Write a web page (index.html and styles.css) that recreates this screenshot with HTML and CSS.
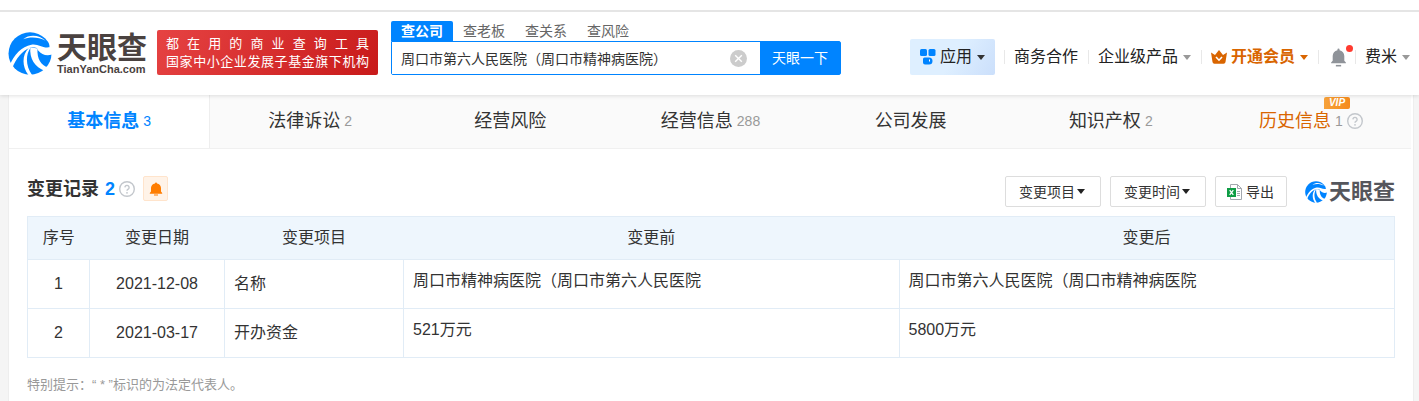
FILE: index.html
```
<!DOCTYPE html>
<html lang="zh-CN">
<head>
    <meta charset="UTF-8">
    <title>天眼查</title>
    <link rel="stylesheet" href="styles.css">
</head>
<body>
    <svg class="defs" width="0" height="0">
        <symbol id="logo" viewBox="0 0 128 126">
            <ellipse cx="64" cy="63" rx="63" ry="62" fill="#0084ff"/>
            <path d="M44 21C62 6 92 8 110 26C88 14 64 14 44 21Z" fill="#fff"/>
            <path d="M5 98C16 66 40 42 68 37C90 34 98 48 121 45L121 32L129 32L129 66C112 72 98 66 88 54L84 47C78 45 70 44 64 46C42 54 22 78 12 106Z" fill="#fff"/>
            <path d="M60 47C40 68 40 102 60 127L70 126C52 100 50 70 65 47Z" fill="#fff"/>
            <path d="M65 45C62 78 78 104 108 114L117 103C96 98 84 78 86 48Z" fill="#fff"/>
        </symbol>
        <symbol id="bell" viewBox="0 0 16 18">
            <path d="M7 1.500a1 1 0 0 1 2 0v.6c2.700.5 4.500 2.700 4.500 5.400v4.500l1.500 1.700v.8H1v-.8L2.500 12V7.500C2.500 4.800 4.300 2.600 7 2.100z"/>
            <path d="M5.500 16h5v1.500h-5z"/>
        </symbol>
        <symbol id="help" viewBox="0 0 16 16">
            <circle cx="8" cy="8" r="7.300" fill="none" stroke="#c3c7cc" stroke-width="1.400"/>
            <path d="M5.900 6.400a2.100 2.100 0 1 1 3.300 1.800C8.400 8.700 8 9 8 9.800" fill="none" stroke="#c3c7cc" stroke-width="1.400"/>
            <circle cx="8" cy="11.800" r=".9" fill="#c3c7cc"/>
        </symbol>
    </svg>

    <header class="header">
        <a class="brand" href="#">
            <svg class="brand-icon"><use href="#logo"/></svg>
            <span class="brand-text">
                <span class="brand-name">天眼查</span>
                <span class="brand-domain">TianYanCha.com</span>
            </span>
        </a>
        <div class="slogan">
            <p>都在用的商业查询工具</p>
            <p>国家中小企业发展子基金旗下机构</p>
        </div>
        <form class="search">
            <div class="search-tabs">
                <button type="button" class="search-tab active">查公司</button>
                <button type="button" class="search-tab">查老板</button>
                <button type="button" class="search-tab">查关系</button>
                <button type="button" class="search-tab">查风险</button>
            </div>
            <div class="search-box">
                <input type="text" class="search-input" aria-label="搜索" value="周口市第六人民医院（周口市精神病医院）">
                <button type="button" class="clear" aria-label="清除">
                    <svg width="17" height="17" viewBox="0 0 17 17"><circle cx="8.500" cy="8.500" r="8.500" fill="#ccc"/><path d="M5.200 5.200l6.600 6.600M11.800 5.200l-6.600 6.600" stroke="#fff" stroke-width="1.400"/></svg>
                </button>
                <button type="submit" class="search-btn">天眼一下</button>
            </div>
        </form>
        <nav class="nav">
            <button type="button" class="app-btn">
                <svg width="16" height="16" viewBox="0 0 16 16" fill="#0084ff"><rect x="0" y="0" width="7" height="7" rx="1.500"/><rect x="8.500" y="0" width="7" height="7" rx="1.500"/><path d="M4.500 8.500H9a3.500 3.500 0 0 1 0 7H5a2 2 0 0 1-2-2V10a1.500 1.500 0 0 1 1.500-1.500z"/><path d="M9.500 10.500v2" stroke="#fff"/></svg>
                应用<i class="caret"></i>
            </button>
            <a href="#" class="nav-item">商务合作</a>
            <a href="#" class="nav-item">企业级产品<i class="caret light"></i></a>
            <a href="#" class="nav-item vip">
                <svg width="16" height="14" viewBox="0 0 16 14"><path d="M0 2.500l4 2.500L8 0l4 5 4-2.500L14.500 12a2 2 0 0 1-2 1.800h-9a2 2 0 0 1-2-1.800z" fill="#d96500"/><path d="M5 7l3 3.200L11 7" fill="none" stroke="#fff" stroke-width="1.600"/></svg>
                开通会员<i class="caret orange"></i>
            </a>
            <a href="#" class="nav-item message" aria-label="消息"><svg width="17" height="19" fill="#8f9399"><use href="#bell"/></svg><i class="dot"></i></a>
            <a href="#" class="nav-item user">费米<i class="caret light"></i></a>
        </nav>
    </header>

    <main class="container">
        <nav class="tabs">
            <a href="#" class="tab active">基本信息<span class="count">3</span></a>
            <a href="#" class="tab">法律诉讼<span class="count">2</span></a>
            <a href="#" class="tab">经营风险</a>
            <a href="#" class="tab">经营信息<span class="count">288</span></a>
            <a href="#" class="tab">公司发展</a>
            <a href="#" class="tab">知识产权<span class="count">2</span></a>
            <a href="#" class="tab history"><span class="history-name">历史信息<b class="vip-badge">VIP</b></span><span class="count">1</span><svg class="help"><use href="#help"/></svg></a>
        </nav>

        <section class="section">
            <div class="section-head">
                <div class="section-title">
                    <h2>变更记录<span class="total">2</span></h2>
                    <svg class="help"><use href="#help"/></svg>
                    <button type="button" class="monitor" aria-label="监控">
                        <svg width="14" height="14" viewBox="0 0 14 14"><path d="M6 1.500a1 1 0 0 1 2 0c2.400.4 4 2.200 4 4.500v3.500l1.200 1.500v.8H.8V11L2 9.500V6c0-2.300 1.600-4.100 4-4.500zM5 12.500h4v1H5z" fill="#ff7d00"/></svg>
                    </button>
                </div>
                <div class="tools">
                    <button type="button" class="tool">变更项目<i class="caret"></i></button>
                    <button type="button" class="tool">变更时间<i class="caret"></i></button>
                    <button type="button" class="tool export">
                        <svg width="15" height="16" viewBox="0 0 15 16"><path d="M3.500.5h7l4 4v11h-11z" fill="#fff" stroke="#a3a8ae"/><path d="M10.500.5v4h4" fill="none" stroke="#a3a8ae"/><path d="M10 7.500h3M10 9.500h3M10 11.500h3" stroke="#a3a8ae"/><rect y="4" width="9" height="9" fill="#0f9d45"/><path d="M2.700 6.200l3.600 4.600M6.300 6.200l-3.600 4.600" stroke="#fff" stroke-width="1.300"/></svg>
                        导出
                    </button>
                    <span class="watermark"><svg class="watermark-icon"><use href="#logo"/></svg>天眼查</span>
                </div>
            </div>
            <table class="table">
                <colgroup>
                    <col class="col-no"><col class="col-date"><col class="col-item"><col><col>
                </colgroup>
                <thead>
                    <tr><th>序号</th><th>变更日期</th><th>变更项目</th><th>变更前</th><th>变更后</th></tr>
                </thead>
                <tbody>
                    <tr>
                        <td class="center">1</td>
                        <td class="center">2021-12-08</td>
                        <td>名称</td>
                        <td class="content">周口市精神病医院（周口市第六人民医院</td>
                        <td class="content">周口市第六人民医院（周口市精神病医院</td>
                    </tr>
                    <tr>
                        <td class="center">2</td>
                        <td class="center">2021-03-17</td>
                        <td>开办资金</td>
                        <td class="content">521万元</td>
                        <td class="content">5800万元</td>
                    </tr>
                </tbody>
            </table>
            <p class="tip">特别提示：“ * ”标识的为法定代表人。</p>
        </section>
    </main>
</body>
</html>
```
FILE: styles.css
```
* {
    box-sizing: border-box;
}
body {
    margin: 0;
    background-color: #f5f5f5;
    color: #333;
    font-family: "Liberation Sans", "Noto Sans CJK SC", sans-serif;
    font-size: 16px;
    line-height: 24px;
}
a {
    color: inherit;
    text-decoration: none;
}
button, input {
    font-family: inherit;
    line-height: inherit;
    color: inherit;
    border: none;
    padding: 0;
    margin: 0;
}
button {
    cursor: pointer;
}
svg {
    flex: none;
}
p, h2 {
    margin: 0;
}
.defs {
    position: absolute;
}
.caret {
    flex: none;
    border: 4px solid transparent;
    border-top: 5px solid #333;
    border-bottom: none;
    margin-left: 5px;
}
.caret.light {
    border-top-color: #999;
}
.caret.orange {
    border-top-color: #d96500;
}
.help {
    width: 16px;
    height: 16px;
}

/* header */
.header {
    position: relative;
    z-index: 1;
    display: flex;
    align-items: center;
    background-color: #fff;
    padding: 8px 9px 20px 8px;
    box-shadow: 0 1px 4px rgba(0, 0, 0, 0.12);
}
.header::before {
    content: "";
    position: absolute;
    top: 10px;
    left: 0;
    right: 0;
    height: 2px;
    background-color: #e5e5e5;
}
.brand {
    display: flex;
    align-items: center;
    margin-top: 24px;
}
.brand-icon {
    width: 44px;
    height: 43px;
    margin-right: 5px;
}
.brand-text {
    display: flex;
    flex-direction: column;
    color: #4a4240;
    font-weight: bold;
}
.brand-name {
    font-size: 30px;
    line-height: 30px;
}
.brand-domain {
    font-size: 11px;
    line-height: 12px;
}
.slogan {
    width: 221px;
    margin: 22px 0 0 10px;
    padding: 5px 9px 4px;
    border-radius: 2px;
    background: linear-gradient(120deg, #e64343, #c81a1a);
    color: #fff;
    font-size: 13px;
    line-height: 18px;
    text-align-last: justify;
}
.search {
    width: 450px;
    margin: 13px 0 0 13px;
}
.search-tabs {
    display: flex;
}
.search-tab {
    width: 62px;
    height: 20px;
    background: none;
    color: #666;
    font-size: 14px;
    line-height: 18px;
}
.search-tab.active {
    background-color: #0084ff;
    border-radius: 2px 2px 0 0;
    color: #fff;
    font-weight: bold;
}
.search-box {
    display: flex;
    align-items: center;
    height: 34px;
    border: 1px solid #0084ff;
    border-radius: 0 2px 2px 2px;
}
.search-input {
    flex: 1;
    min-width: 0;
    height: 32px;
    padding-left: 9px;
    outline: none;
    font-size: 14px;
}
.clear {
    display: flex;
    margin-right: 13px;
    background: none;
}
.search-btn {
    width: 80px;
    height: 32px;
    background-color: #0084ff;
    color: #fff;
    font-size: 14px;
}
.nav {
    display: flex;
    align-items: center;
    margin: 31px 0 0 auto;
    color: #222;
}
.app-btn {
    display: flex;
    align-items: center;
    gap: 4px;
    height: 36px;
    padding: 0 10px;
    margin-right: 9px;
    border-radius: 2px;
    background: linear-gradient(120deg, #deefff 50%, #cbdffb);
    font-size: 16px;
}
.app-btn .caret {
    margin-left: 1px;
}
.nav-item {
    position: relative;
    display: flex;
    align-items: center;
    padding: 0 10px;
}
.nav-item::before {
    content: "";
    position: absolute;
    left: 0;
    top: 5px;
    height: 14px;
    border-left: 1px solid #e8e8e8;
}
.vip {
    gap: 4px;
    color: #d96500;
    font-weight: bold;
}
.vip .caret {
    margin-left: 1px;
}
.message {
    height: 24px;
    padding: 0 8px 0 12px;
}
.dot {
    position: absolute;
    top: 0;
    right: 2px;
    width: 7px;
    height: 7px;
    border-radius: 50%;
    background-color: #ff3b30;
}
.user {
    padding-right: 0;
}

/* company detail */
.container {
    margin: 0 5px 0 8px;
    border: 1px solid #eee;
    border-top: none;
    background-color: #fff;
}
.tabs {
    display: flex;
    margin-right: 2px;
    background-color: #fafafa;
    border-bottom: 1px solid #f0f0f0;
}
.tab {
    flex: 1;
    display: flex;
    align-items: center;
    justify-content: center;
    height: 53px;
    padding-bottom: 1px;
    font-size: 18px;
}
.tab.active {
    background-color: #fff;
    border-right: 1px solid #eee;
    color: #0084ff;
    font-weight: bold;
}
.count {
    margin-left: 4px;
    color: #999;
    font-size: 14px;
    font-weight: normal;
}
.active .count {
    color: #0084ff;
}
.history {
    color: #d96500;
}
.history .help {
    margin-left: 4px;
}
.history-name {
    position: relative;
}
.vip-badge {
    position: absolute;
    top: -12px;
    right: -19px;
    width: 26px;
    height: 12px;
    border-radius: 2px 2px 2px 0;
    background: linear-gradient(90deg, #f7a23a, #f58a1c);
    color: #fff;
    font-size: 10px;
    font-style: italic;
    line-height: 12px;
    text-align: center;
}
.section {
    padding: 27px 18px 20px;
}
.section-head {
    display: flex;
    align-items: flex-start;
    margin-bottom: 9px;
}
.section-title {
    display: flex;
    align-items: center;
}
.section-title h2 {
    margin-right: 4px;
    font-size: 18px;
}
.total {
    margin-left: 6px;
    color: #0084ff;
}
.monitor {
    display: flex;
    align-items: center;
    justify-content: center;
    width: 25px;
    height: 25px;
    margin-left: 8px;
    border: 1px solid #ffe4cc;
    border-radius: 2px;
    background-color: #fff3e8;
}
.tools {
    display: flex;
    align-items: center;
    gap: 9px;
    margin-left: auto;
}
.tool {
    display: flex;
    align-items: center;
    height: 31px;
    padding: 0 15px 0 13px;
    border: 1px solid #ddd;
    border-radius: 2px;
    background-color: #fff;
    font-size: 14px;
}
.tool .caret {
    margin-left: 2px;
    border-top-color: #222;
}
.export {
    gap: 4px;
    padding: 0 12px 0 11px;
}
.watermark {
    display: flex;
    align-items: center;
    gap: 2px;
    margin-left: 9px;
    color: #55565c;
    font-size: 22px;
    font-weight: bold;
}
.watermark-icon {
    width: 22px;
    height: 22px;
}
.table {
    width: 100%;
    table-layout: fixed;
    border-collapse: collapse;
}
.col-no {
    width: 62px;
}
.col-date {
    width: 135px;
}
.col-item {
    width: 179px;
}
.table th, .table td {
    height: 49px;
    padding: 0 9px;
    border: 1px solid #e1ecf6;
    text-align: left;
}
.table th {
    height: 43px;
    border-left: none;
    border-right: none;
    background-color: #eef6fd;
    font-weight: normal;
    text-align: center;
}
.table thead tr {
    border: 1px solid #e1ecf6;
}
.table .center {
    text-align: center;
}
.table .content {
    padding-top: 9px;
    vertical-align: top;
}
.tip {
    margin-top: 15px;
    color: #999;
    font-size: 13px;
}
```
